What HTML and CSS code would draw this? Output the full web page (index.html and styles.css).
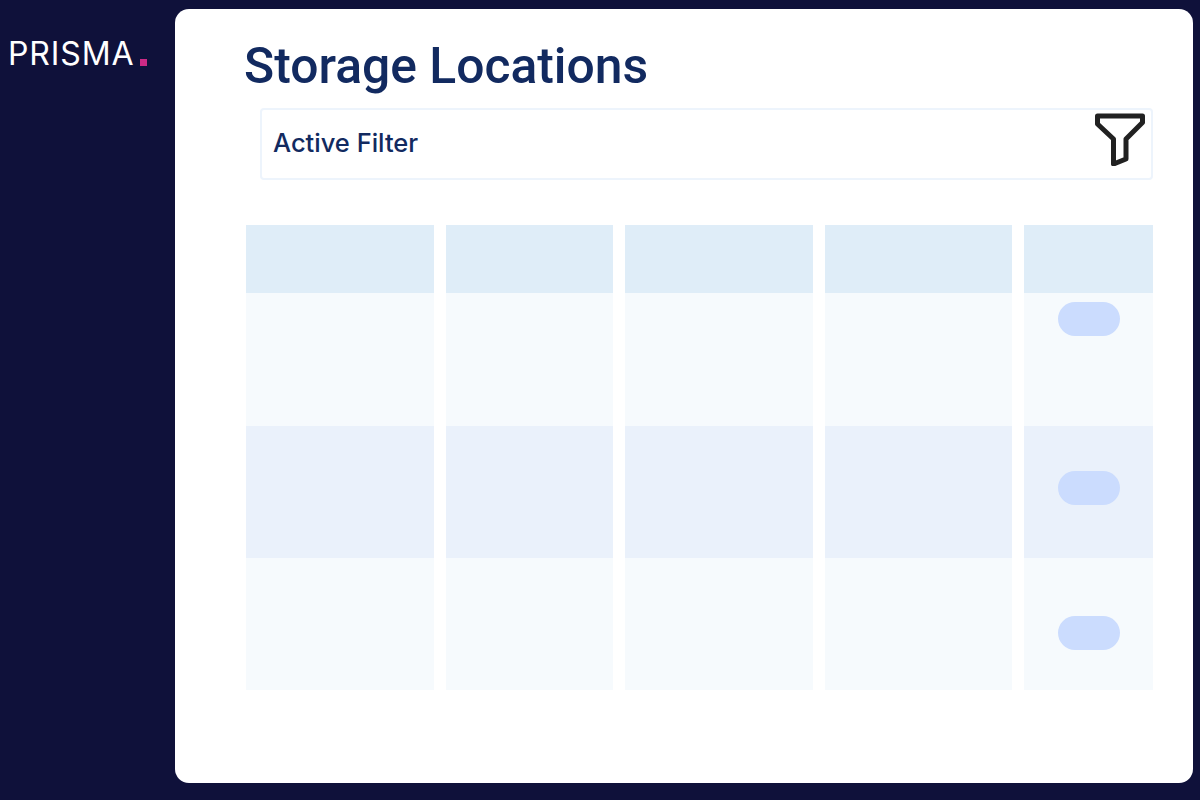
FILE: index.html
```html
<!DOCTYPE html>
<html lang="en">
<head>
  <meta charset="UTF-8">
  <meta name="viewport" content="width=device-width, initial-scale=1.0">
  <title>Storage Locations</title>
  <link rel="stylesheet" href="styles.css">
</head>
<body>
  <div class="layout">

    <aside class="sidebar">
      <div class="logo">PRISMA<span class="logo_dot"></span></div>
    </aside>

    <main class="card">
      <h1>Storage Locations</h1>

      <div class="filter">
        <span class="filter_label">Active Filter</span>
        <svg class="filter_icon" width="50" height="53" viewBox="0 0 50 53" fill="none" stroke="#212121" stroke-width="5" stroke-linejoin="round">
          <path d="M2.5 3H47.5V9.5L31 26V46L18.5 51V26L2.5 11Z"/>
        </svg>
      </div>

      <div class="table">
        <div class="cell head"></div>
        <div class="cell head"></div>
        <div class="cell head"></div>
        <div class="cell head"></div>
        <div class="cell head"></div>

        <div class="cell light"></div>
        <div class="cell light"></div>
        <div class="cell light"></div>
        <div class="cell light"></div>
        <div class="cell light action first"><div class="pill"></div></div>

        <div class="cell dark"></div>
        <div class="cell dark"></div>
        <div class="cell dark"></div>
        <div class="cell dark"></div>
        <div class="cell dark action second"><div class="pill"></div></div>

        <div class="cell light"></div>
        <div class="cell light"></div>
        <div class="cell light"></div>
        <div class="cell light"></div>
        <div class="cell light action third"><div class="pill"></div></div>
      </div>
    </main>

  </div>
</body>
</html>
```

FILE: styles.css
```css
*{
  box-sizing: border-box;
  font-family: Roboto, "Liberation Sans", sans-serif;
}

body{
  margin:0;
  background-color: #0f113a;
}

.layout{
  display:flex;
  height:800px;
  padding:9px 7px 17px 0;
}

.sidebar{
  width:175px;
  flex-shrink:0;
  padding:29px 0 0 8px;
}

.logo{
  display:flex;
  align-items:flex-end;
  font-family: Inter, sans-serif;
  font-size:32px;
  line-height:32px;
  font-weight:400;
  letter-spacing:0.9px;
  color:#fff;
}

.logo_dot{
  width:7px;
  height:7px;
  margin:0 0 4px 5px;
  background-color:#cc2a85;
}

.card{
  flex:1;
  background-color:#fff;
  border-radius:14px;
  padding:28px 40px 0 69px;
}

h1{
  margin:0;
  font-size:49.8px;
  line-height:58px;
  font-weight:500;
  color:#122a60;
}

.filter{
  display:flex;
  justify-content:space-between;
  align-items:flex-start;
  height:72px;
  margin:13px 0 45px 16px;
  padding:3px 6px 0 11px;
  border:2px solid #edf4fc;
  border-radius:4px;
}

.filter_label{
  margin-top:14px;
  font-family: Inter, sans-serif;
  font-size:25.5px;
  line-height:32px;
  font-weight:500;
  color:#122a60;
}

.table{
  display:grid;
  grid-template-columns:188px 167px 188px 187px 129px;
  grid-template-rows:68px 133px 132px 132px;
  column-gap:12px;
  margin-left:2px;
}

.head{
  background-color:#dfedf8;
}

.light{
  background-color:#f6fafd;
}

.dark{
  background-color:#eaf1fb;
}

.action{
  display:flex;
  justify-content:center;
}

.first{
  padding-top:9px;
}

.second{
  padding-top:45px;
}

.third{
  padding-top:58px;
}

.pill{
  width:62px;
  height:34px;
  border-radius:17px;
  background-color:#cbdcfe;
}
```
